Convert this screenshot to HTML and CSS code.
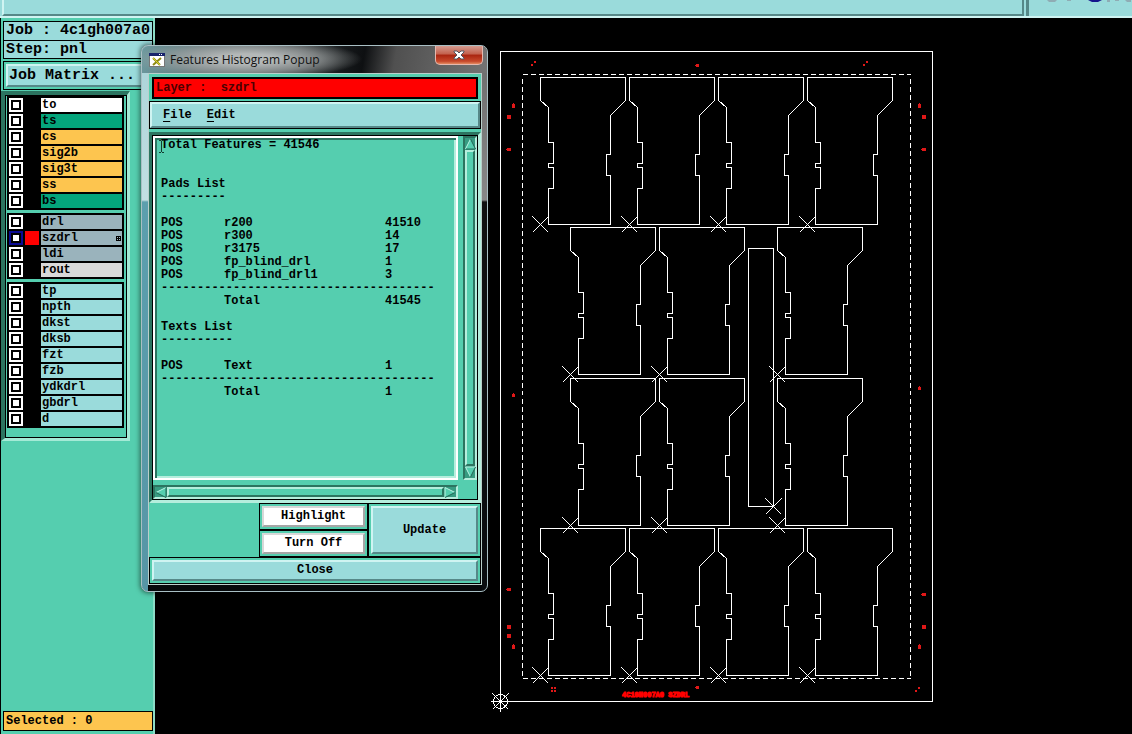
FILE: index.html
```html
<!DOCTYPE html>
<html lang="en">
<head>
<meta charset="utf-8">
<title>Graphic Editor</title>
<link rel="stylesheet" href="styles.css">
</head>
<body>
<div class="app">
  <header class="topbar">
    <div class="topbar-main"></div>
    <div class="topbar-logo">
      <svg width="102" height="4" viewBox="1030 0 102 4" aria-hidden="true">
        <path d="M1048 0h10l-2 2h-6zM1068 0h4v1h-4zM1108 0h3v2h-3zM1116 0h4v1h-4zM1126 0h6v2h-4z" fill="#8facb4"/>
        <path d="M1089 0h14l-4 2h-6z" fill="#14148c"/>
      </svg>
    </div>
  </header>
  <aside class="sidebar">
    <div class="job-info">
      <div class="info-line">Job : 4c1gh007a0</div>
      <div class="info-line">Step: pnl</div>
    </div>
    <div class="matrix-frame"><button class="matrix-button" type="button">Job Matrix ...</button></div>
    <div class="layers-well">
      <div class="layers">
        <div class="group">
          <label class="layer"><input type="checkbox"><span class="swatch"></span><span class="name white">to</span></label>
          <label class="layer"><input type="checkbox"><span class="swatch"></span><span class="name green">ts</span></label>
          <label class="layer"><input type="checkbox"><span class="swatch"></span><span class="name amber">cs</span></label>
          <label class="layer"><input type="checkbox"><span class="swatch"></span><span class="name amber">sig2b</span></label>
          <label class="layer"><input type="checkbox"><span class="swatch"></span><span class="name amber">sig3t</span></label>
          <label class="layer"><input type="checkbox"><span class="swatch"></span><span class="name amber">ss</span></label>
          <label class="layer"><input type="checkbox"><span class="swatch"></span><span class="name green">bs</span></label>
        </div>
        <div class="group">
          <label class="layer"><input type="checkbox"><span class="swatch"></span><span class="name slate">drl</span></label>
          <label class="layer"><input type="checkbox" checked><span class="swatch red"></span><span class="name slate">szdrl
            <svg width="5" height="5" viewBox="0 0 5 5" aria-hidden="true"><path d="M0 0h5v5h-5zM1 1v1h1v-1zM3 1v1h1v-1zM1 3v1h1v-1zM3 3v1h1v-1z" fill="#000" fill-rule="evenodd"/></svg></span></label>
          <label class="layer"><input type="checkbox"><span class="swatch"></span><span class="name slate">ldi</span></label>
          <label class="layer"><input type="checkbox"><span class="swatch"></span><span class="name grey">rout</span></label>
        </div>
        <div class="group">
          <label class="layer"><input type="checkbox"><span class="swatch"></span><span class="name">tp</span></label>
          <label class="layer"><input type="checkbox"><span class="swatch"></span><span class="name">npth</span></label>
          <label class="layer"><input type="checkbox"><span class="swatch"></span><span class="name">dkst</span></label>
          <label class="layer"><input type="checkbox"><span class="swatch"></span><span class="name">dksb</span></label>
          <label class="layer"><input type="checkbox"><span class="swatch"></span><span class="name">fzt</span></label>
          <label class="layer"><input type="checkbox"><span class="swatch"></span><span class="name">fzb</span></label>
          <label class="layer"><input type="checkbox"><span class="swatch"></span><span class="name">ydkdrl</span></label>
          <label class="layer"><input type="checkbox"><span class="swatch"></span><span class="name">gbdrl</span></label>
          <label class="layer"><input type="checkbox"><span class="swatch"></span><span class="name">d</span></label>
        </div>
      </div>
    </div>
    <div class="selected">Selected : 0</div>
  </aside>
  <main class="canvas">
    <svg class="board" width="977" height="716" viewBox="155 18 977 716" role="img" aria-label="Panel layout">
      <defs>
        <path id="part" d="M0 0H85V23L70 38V77H66V98H70V147H8V111H13V90H8V86H13V65H8V30L0 23Z"/>
        <path id="cross" d="M-8 -8L8 8M-8 8L8 -8"/>
        <g id="cell"><use href="#part"/><use href="#cross" y="147"/></g>
      </defs>
      <g class="lines" transform="translate(.5 .5)">
        <rect x="500" y="51" width="432" height="650"/>
        <path class="dash" d="M522 74H910M522 678H910M522 78V678M910 78V678"/>
        <use href="#cell" x="540" y="77"/><use href="#cell" x="629" y="77"/><use href="#cell" x="718" y="77"/><use href="#cell" x="807" y="77"/>
        <use href="#cell" x="570" y="227"/><use href="#cell" x="659" y="227"/><use href="#cell" x="777" y="227"/>
        <use href="#cell" x="570" y="378"/><use href="#cell" x="659" y="378"/><use href="#cell" x="777" y="378"/>
        <use href="#cell" x="540" y="528"/><use href="#cell" x="629" y="528"/><use href="#cell" x="718" y="528"/><use href="#cell" x="807" y="528"/>
        <rect x="748" y="248" width="25" height="258"/>
        <use href="#cross" x="773" y="506"/>
        <use href="#cross" x="500" y="701"/>
        <circle cx="500" cy="701" r="7"/>
        <path d="M490 701H510M500 691V711"/>
      </g>
      <g class="marks">
        <path d="M531 64h2v2h-2zM534 61h2v2h-2zM863 64h2v2h-2zM866 61h2v2h-2zM915 690h2v2h-2zM918 687h2v2h-2z"/>
        <path d="M551 687h2v2h-2zM554 687h2v2h-2zM551 690h2v2h-2zM554 690h2v2h-2z"/>
        <path d="M696 64h3v3h-3zM695 65h4v1h-4zM696 686h3v3h-3zM695 687h4v1h-4z"/>
        <path d="M512 104h3v4h-3zM513 103h1v1h-1zM918 104h3v4h-3zM919 103h1v1h-1zM512 645h3v4h-3zM513 644h1v1h-1zM918 645h3v4h-3zM919 644h1v1h-1z"/>
        <path d="M507 115h4v4h-4zM922 115h4v4h-4zM507 625h4v4h-4zM507 634h4v4h-4zM922 625h4v4h-4z"/>
        <path d="M507 148h4v3h-4zM506 149h1v1h-1zM922 148h4v3h-4zM921 149h1v1h-1zM507 588h4v3h-4zM506 589h1v1h-1zM922 593h4v3h-4zM921 594h1v1h-1z"/>
        <path d="M512 394h3v3h-3zM513 393h1v1h-1zM918 387h3v3h-3zM919 386h1v1h-1z"/>
        <text x="622" y="697">4C1GH007A0 SZDRL</text>
      </g>
    </svg>
  </main>
</div>

<section class="window" role="dialog" aria-labelledby="window-title">
  <div class="titlebar">
    <svg width="16" height="14" viewBox="0 0 16 14" aria-hidden="true">
      <rect width="16" height="14" fill="#777"/><rect x="1" y="1" width="14" height="12" fill="#fff"/>
      <rect width="16" height="3" fill="#18246c"/><rect x="10" y="1" width="1" height="1" fill="#fff"/><rect x="12" y="1" width="1" height="1" fill="#fff"/>
      <path d="M4 5L11 12M12 5L4 12" stroke="#8d8a12" stroke-width="2"/><path d="M4 5L11 12" stroke="#d9d52a"/>
    </svg>
    <h1 id="window-title">Features Histogram Popup</h1>
    <button class="win-close" type="button" aria-label="Close window">
      <svg width="12" height="10" viewBox="0 0 12 10" aria-hidden="true"><path d="M1 1h3l2 2 2-2h3v1L8 5l3 3v1H8L6 7 4 9H1V8l3-3-3-3z" fill="#fff" stroke="#54555f"/></svg>
    </button>
  </div>
  <div class="client">
    <div class="layer-frame"><div class="layer-field">Layer :&nbsp; szdrl</div></div>
    <nav class="menubar"><button type="button"><u>F</u>ile</button><button type="button"><u>E</u>dit</button></nav>
    <div class="list-well">
      <div class="list-box">
        <div class="report" tabindex="0">
          <p class="summary"><svg class="caret" width="5" height="13" viewBox="0 0 5 13" aria-hidden="true"><path d="M0 .5h2M3 .5h2M2.500 1v11M0 12.500h2M3 12.500h2" stroke="#123c30"/></svg>Total Features = 41546</p>
          <h2>Pads List</h2>
          <p class="rule">---------</p>
          <table>
            <tr><td>POS</td><td>r200</td><td>41510</td></tr>
            <tr><td>POS</td><td>r300</td><td>14</td></tr>
            <tr><td>POS</td><td>r3175</td><td>17</td></tr>
            <tr><td>POS</td><td>fp_blind_drl</td><td>1</td></tr>
            <tr><td>POS</td><td>fp_blind_drl1</td><td>3</td></tr>
            <tr><td colspan="3">--------------------------------------</td></tr>
            <tr><td></td><td>Total</td><td>41545</td></tr>
          </table>
          <h2 class="next">Texts List</h2>
          <p class="rule">----------</p>
          <table>
            <tr><td>POS</td><td>Text</td><td>1</td></tr>
            <tr><td colspan="3">--------------------------------------</td></tr>
            <tr><td></td><td>Total</td><td>1</td></tr>
          </table>
        </div>
        <div class="scroll vertical">
          <button type="button" aria-label="Scroll up"><svg width="11" height="12" viewBox="0 0 11 12" aria-hidden="true"><path d="M5.500 1L10.500 11H.5z" fill="#55ceaf"/><path d="M.5 11L5.500 1" stroke="#bdf3e4"/><path d="M5.500 1L10.500 11H1" fill="none" stroke="#226655"/></svg></button>
          <div class="thumb"></div>
          <button type="button" aria-label="Scroll down"><svg width="11" height="12" viewBox="0 0 11 12" aria-hidden="true"><path d="M.5 1H10.500L5.500 11z" fill="#55ceaf"/><path d="M5.500 11L.5 1H10" fill="none" stroke="#bdf3e4"/><path d="M10.500 1L5.500 11" stroke="#226655"/></svg></button>
        </div>
        <div class="scroll horizontal">
          <button type="button" aria-label="Scroll left"><svg width="12" height="11" viewBox="0 0 12 11" aria-hidden="true"><path d="M1 5.500L11 .5V10.500z" fill="#55ceaf"/><path d="M1 5.500L11 .5" stroke="#bdf3e4"/><path d="M11 .5V10.500L1 5.500" fill="none" stroke="#226655"/></svg></button>
          <div class="thumb"></div>
          <button type="button" aria-label="Scroll right"><svg width="12" height="11" viewBox="0 0 12 11" aria-hidden="true"><path d="M1 .5V10.500L11 5.500z" fill="#55ceaf"/><path d="M1 10V.5L11 5.500" fill="none" stroke="#bdf3e4"/><path d="M11 5.500L1 10.500" stroke="#226655"/></svg></button>
        </div>
      </div>
    </div>
    <div class="actions">
      <div class="frame highlight"><button class="white-button" type="button">Highlight</button></div>
      <div class="frame turn-off"><button class="white-button" type="button">Turn Off</button></div>
      <div class="frame update"><button type="button">Update</button></div>
    </div>
    <div class="frame close"><button type="button">Close</button></div>
  </div>
</section>
</body>
</html>
```

FILE: styles.css
```css
:root {
  --teal: #55ceaf;
  --teal-dark: #2c7460;
  --teal-light: #b5eedd;
  --cyan: #9adbdb;
  --cyan-light: #cff4f2;
  --cyan-dark: #568888;
}
* { box-sizing: border-box; }
body {
  margin: 0;
  background: #000;
  color: #000;
  font: bold 12px/13px "Liberation Mono", monospace;
  overflow: hidden;
}
button { font: inherit; color: inherit; padding: 0; border: 0; margin: 0; }
h1, h2, p { margin: 0; font: inherit; }
svg { display: block; }

.app {
  display: grid;
  grid-template: 18px 1fr / 155px 1fr;
  height: 100vh;
}

/* Top strip */
.topbar {
  grid-column: 1 / 3;
  display: grid;
  grid-template-columns: 1fr 106px;
  background: var(--cyan);
  border-bottom: 2px solid var(--cyan-light);
}
.topbar-main {
  margin-left: 2px;
  border-left: 2px solid var(--cyan-light);
  border-right: 2px solid var(--cyan-dark);
  border-bottom: 2px solid var(--cyan-dark);
  margin-right: 2px;
}
.topbar-logo { border-left: 3px solid var(--cyan-dark); }

/* Sidebar */
.sidebar {
  display: flex;
  flex-direction: column;
  background: var(--teal);
  border-left: 1px solid #000;
  border-right: 2px solid #8bdcc6;
  padding-top: 3px;
  min-height: 0;
}
.job-info, .matrix-frame, .selected { margin: 0 0 0 2px; border: 1px solid #000; }
.job-info, .matrix-button { font-size: 15px; }
.info-line { background: var(--cyan); height: 18px; line-height: 17px; padding-left: 2px; white-space: nowrap; }
.info-line + .info-line { border-top: 1px solid #000; }
.matrix-frame { margin-top: 2px; padding: 2px; }
.matrix-button {
  width: 100%;
  height: 23px;
  line-height: 18px;
  background: var(--cyan);
  border: 2px solid;
  border-color: var(--cyan-light) var(--cyan-dark) var(--cyan-dark) var(--cyan-light);
  text-align: left;
  padding-left: 1px;
}
.layers-well {
  width: 129px;
  margin-top: 1px;
  border: solid;
  border-width: 4px 3px 3px 4px;
  border-color: var(--teal-dark) #a4ead6 #a4ead6 var(--teal-dark);
}
.layers {
  display: grid;
  gap: 3px;
  border: 1px solid #000;
  padding: 0 2px 9px 1px;
}
.group { background: #000; padding: 2px 2px 0; }
.layer {
  display: grid;
  grid-template-columns: 14px 14px 1fr;
  gap: 2px;
  height: 16px;
  padding-bottom: 2px;
}
.layer input {
  appearance: none;
  margin: 0;
  width: 14px;
  height: 14px;
  background: #fff;
  border: 2px solid #fff;
  box-shadow: inset 0 0 0 2px #000;
}
.layer input:checked { border-color: #0a0a94; }
.red { background: #f00; }
.name {
  display: flex;
  justify-content: space-between;
  align-items: center;
  height: 14px;
  line-height: 14px;
  padding: 0 1px;
  background: var(--cyan);
}
.white { background: #fff; }
.green { background: #04a57c; }
.amber { background: #fdc54f; }
.slate { background: #9ab3bc; }
.grey { background: #d9d9d9; }
.selected {
  margin-top: auto;
  margin-bottom: 3px;
  height: 20px;
  line-height: 18px;
  padding-left: 2px;
  background: #fdc54f;
}

/* Drawing */
.canvas { overflow: hidden; }
.lines { fill: none; stroke: #fff; stroke-width: 1; shape-rendering: crispEdges; }
.dash { stroke-dasharray: 5 3; }
.marks { fill: #e01818; }
.marks text { font-size: 7px; fill: #f00; stroke: #f00; stroke-width: 1px; }

/* Popup window */
.window {
  position: absolute;
  left: 141px;
  top: 45px;
  width: 347px;
  padding: 0 5px 6px 6px;
  border: 1px solid #a9bfc4;
  border-radius: 7px;
  background:
    linear-gradient(#a9d3d8, #c2dfe2 154px, #5c9fae 156px, #5796a6) left / 6px 100% no-repeat,
    linear-gradient(#6b6b6b, #888 154px, #111 156px, #0a0d10) right / 5px 100% no-repeat,
    #06090b;
  box-shadow: 0 0 5px 1px #0008;
}
.titlebar {
  display: flex;
  align-items: center;
  gap: 5px;
  height: 27px;
  margin: 0 -5px 0 -6px;
  padding: 0 4px 0 7px;
  border-radius: 6px 6px 0 0;
  background:
    radial-gradient(ellipse 115px 20px at 105px 13px, #b4b8b8 25%, #a0a4a4aa 65%, transparent),
    linear-gradient(100deg, #6d9a9f, #56696c 20%, #3c4244 45%, #16191b 58%, #0e1012 64%, #505050 73%, #747474);
}
.titlebar h1 { font: 12px/18px "Open Sans", sans-serif; flex: 1; color: #111; }
.win-close {
  align-self: flex-start;
  display: grid;
  place-items: center;
  width: 48px;
  height: 19px;
  border: 1px solid #e6b8ae;
  border-top: 0;
  border-radius: 0 0 5px 5px;
  background: linear-gradient(#d59b90, #c3604c 45%, #a92410 50%, #c7492c 85%, #e38a60);
}
.client { background: var(--teal); border: 1px solid #b9cfca; }
.layer-frame { padding: 3px; }
.layer-field { border: 2px solid #000; background: #f00; height: 22px; line-height: 18px; padding-left: 2px; color: #4a0000; }
.menubar {
  display: flex;
  gap: 15px;
  height: 26px;
  border: 2px solid;
  border-color: var(--cyan-light) var(--cyan-dark) var(--cyan-dark) var(--cyan-light);
  outline: 1px solid #000;
  margin: 0 1px;
  padding: 0 11px;
  background: var(--cyan);
}
.menubar button { background: none; }
.menubar u { text-underline-offset: 3px; }
.list-well {
  margin-top: 4px;
  border: 3px solid;
  border-color: var(--teal-dark) var(--teal-light) var(--teal-light) var(--teal-dark);
}
.list-box {
  display: grid;
  grid-template: 344px 14px / 1fr 14px;
  gap: 5px;
  border: 1px solid #000;
}
.report {
  padding: 1px 6px;
  border: 2px solid #fff;
  box-shadow: inset 2px 2px 0 var(--teal-dark), inset -2px -2px 0 var(--teal-light);
}
.summary { position: relative; margin-bottom: 26px; }
.caret { position: absolute; left: -2px; top: 1px; }
.report .rule { margin-bottom: 13px; }
.report .next { margin-top: 13px; }
table { width: 270px; table-layout: fixed; border-collapse: collapse; }
td { padding: 0; height: 13px; white-space: nowrap; }
td:nth-child(1) { width: 63px; }
td:nth-child(2) { width: 161px; }
.scroll {
  display: flex;
  background: #379b81;
  border: 2px solid;
  border-color: var(--teal-dark) var(--teal-light) var(--teal-light) var(--teal-dark);
}
.vertical { flex-direction: column; }
.scroll button { display: grid; place-items: center; flex: none; background: none; }
.thumb {
  flex: 1;
  background: var(--teal);
  border: 2px solid;
  border-color: var(--teal-light) var(--teal-dark) var(--teal-dark) var(--teal-light);
}
.actions {
  display: grid;
  grid-template: 27px 27px / 1fr 109px 113px;
  grid-template-areas: ". highlight update" ". off update";
}
.highlight { grid-area: highlight; }
.turn-off { grid-area: off; }
.update { grid-area: update; }
.frame { border: 1px solid #000; padding: 2px; background: var(--teal); }
.frame button {
  display: block;
  width: 100%;
  height: 100%;
  background: var(--cyan);
  border: 2px solid;
  border-color: var(--cyan-light) var(--cyan-dark) var(--cyan-dark) var(--cyan-light);
}
.frame .white-button { background: #fff; border-color: #d8d8d8 #a6a6a6 #a6a6a6 #d8d8d8; }
.close { height: 27px; }
```
